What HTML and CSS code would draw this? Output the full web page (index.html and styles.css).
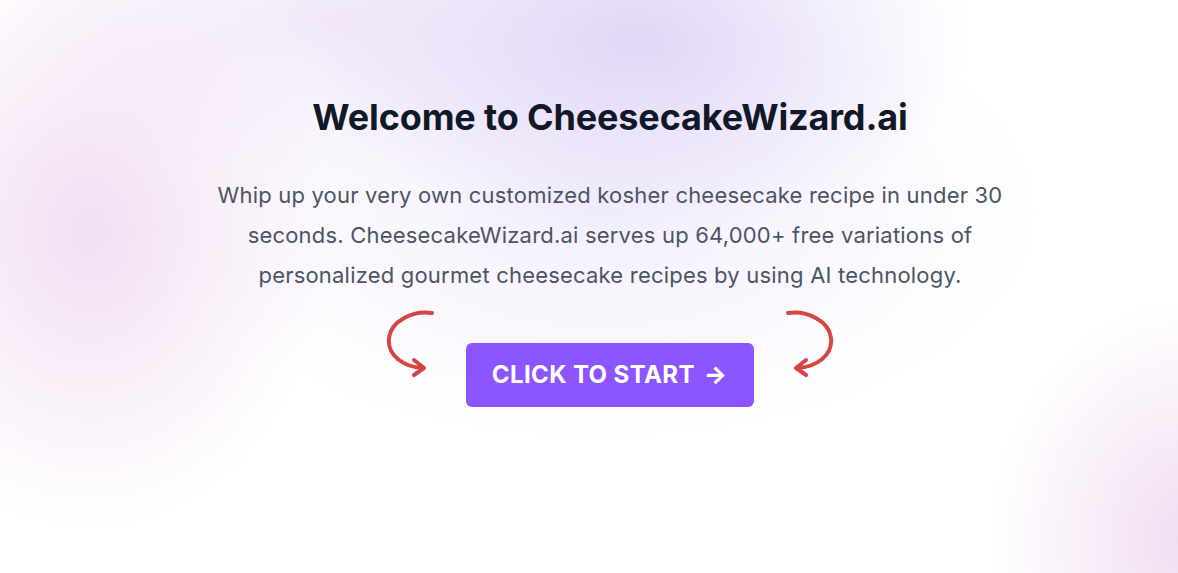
FILE: index.html
```html
<!DOCTYPE html>
<html lang="en">
<head>
<meta charset="utf-8">
<title>CheesecakeWizard.ai</title>
<link rel="stylesheet" href="styles.css">
</head>
<body>
<div class="hero">
	<h1 class="hero_title">Welcome to CheesecakeWizard.ai</h1>
	<p class="hero_text">Whip up your very own customized kosher cheesecake recipe in under 30 seconds. CheesecakeWizard.ai serves up 64,000+ free variations of personalized gourmet cheesecake recipes by using AI technology.</p>
	<div class="cta">
		<svg class="cta_arrow" width="52" height="68" viewBox="0 0 52 68">
			<path d="M49 3 C30 0 8 11 6 28 C4 45 20 57 40 58" />
			<path d="M31 50 L41 58 L31 65" />
		</svg>
		<a href="javascript:;" class="cta_btn">CLICK TO START <span class="cta_icon">&rarr;</span></a>
		<svg class="cta_arrow cta_arrow--flip" width="52" height="68" viewBox="0 0 52 68">
			<path d="M49 3 C30 0 8 11 6 28 C4 45 20 57 40 58" />
			<path d="M31 50 L41 58 L31 65" />
		</svg>
	</div>
</div>
</body>
</html>
```

FILE: styles.css
```css
*{ margin:0; padding:0; box-sizing:border-box;}
a{ text-decoration:none;}
html,body{ height:100%;}
body{ font-family:Inter, "Noto Sans", sans-serif; background:#fff; overflow:hidden;}

.hero{
	min-height:100vh;
	display:flex; flex-direction:column; align-items:center;
	padding-top:93px; padding-left:42px;
	text-align:center;
	background:
		radial-gradient(ellipse 330px 200px at 640px 40px, rgba(222,210,246,.9), rgba(222,210,246,0) 100%),
		radial-gradient(ellipse 240px 300px at 90px 230px, rgba(241,220,242,.95), rgba(241,220,242,0) 100%),
		radial-gradient(ellipse 320px 170px at 330px 20px, rgba(240,228,248,.85), rgba(240,228,248,0) 100%),
		radial-gradient(ellipse 200px 240px at 1190px 540px, rgba(240,218,240,.95), rgba(240,218,240,0) 100%),
		radial-gradient(ellipse 440px 230px at 600px 210px, rgba(238,232,250,.7), rgba(238,232,250,0) 100%),
		#fff;
}
.hero_title{ font-size:36px; line-height:48px; font-weight:700; color:#111827; letter-spacing:-0.15px;}
.hero_text{ margin-top:34px; width:820px; font-size:22px; line-height:40px; color:#4b5563; letter-spacing:0.2px;}

.cta{ display:flex; align-items:flex-start; gap:31px; margin-top:15px;}
.cta_arrow{ fill:none; stroke:#d64541; stroke-width:4; stroke-linecap:round; stroke-linejoin:round;}
.cta_arrow--flip{ transform:scaleX(-1);}
.cta_btn{
	margin-top:33px;
	display:inline-flex; align-items:center; gap:9px;
	padding:16px 27px 16px 26px;
	background:#8b55ff; color:#fff; border-radius:6px;
	font-size:24px; line-height:32px; font-weight:700; letter-spacing:0.4px;
}
.cta_icon{ font-size:24px; font-weight:800;}
```
